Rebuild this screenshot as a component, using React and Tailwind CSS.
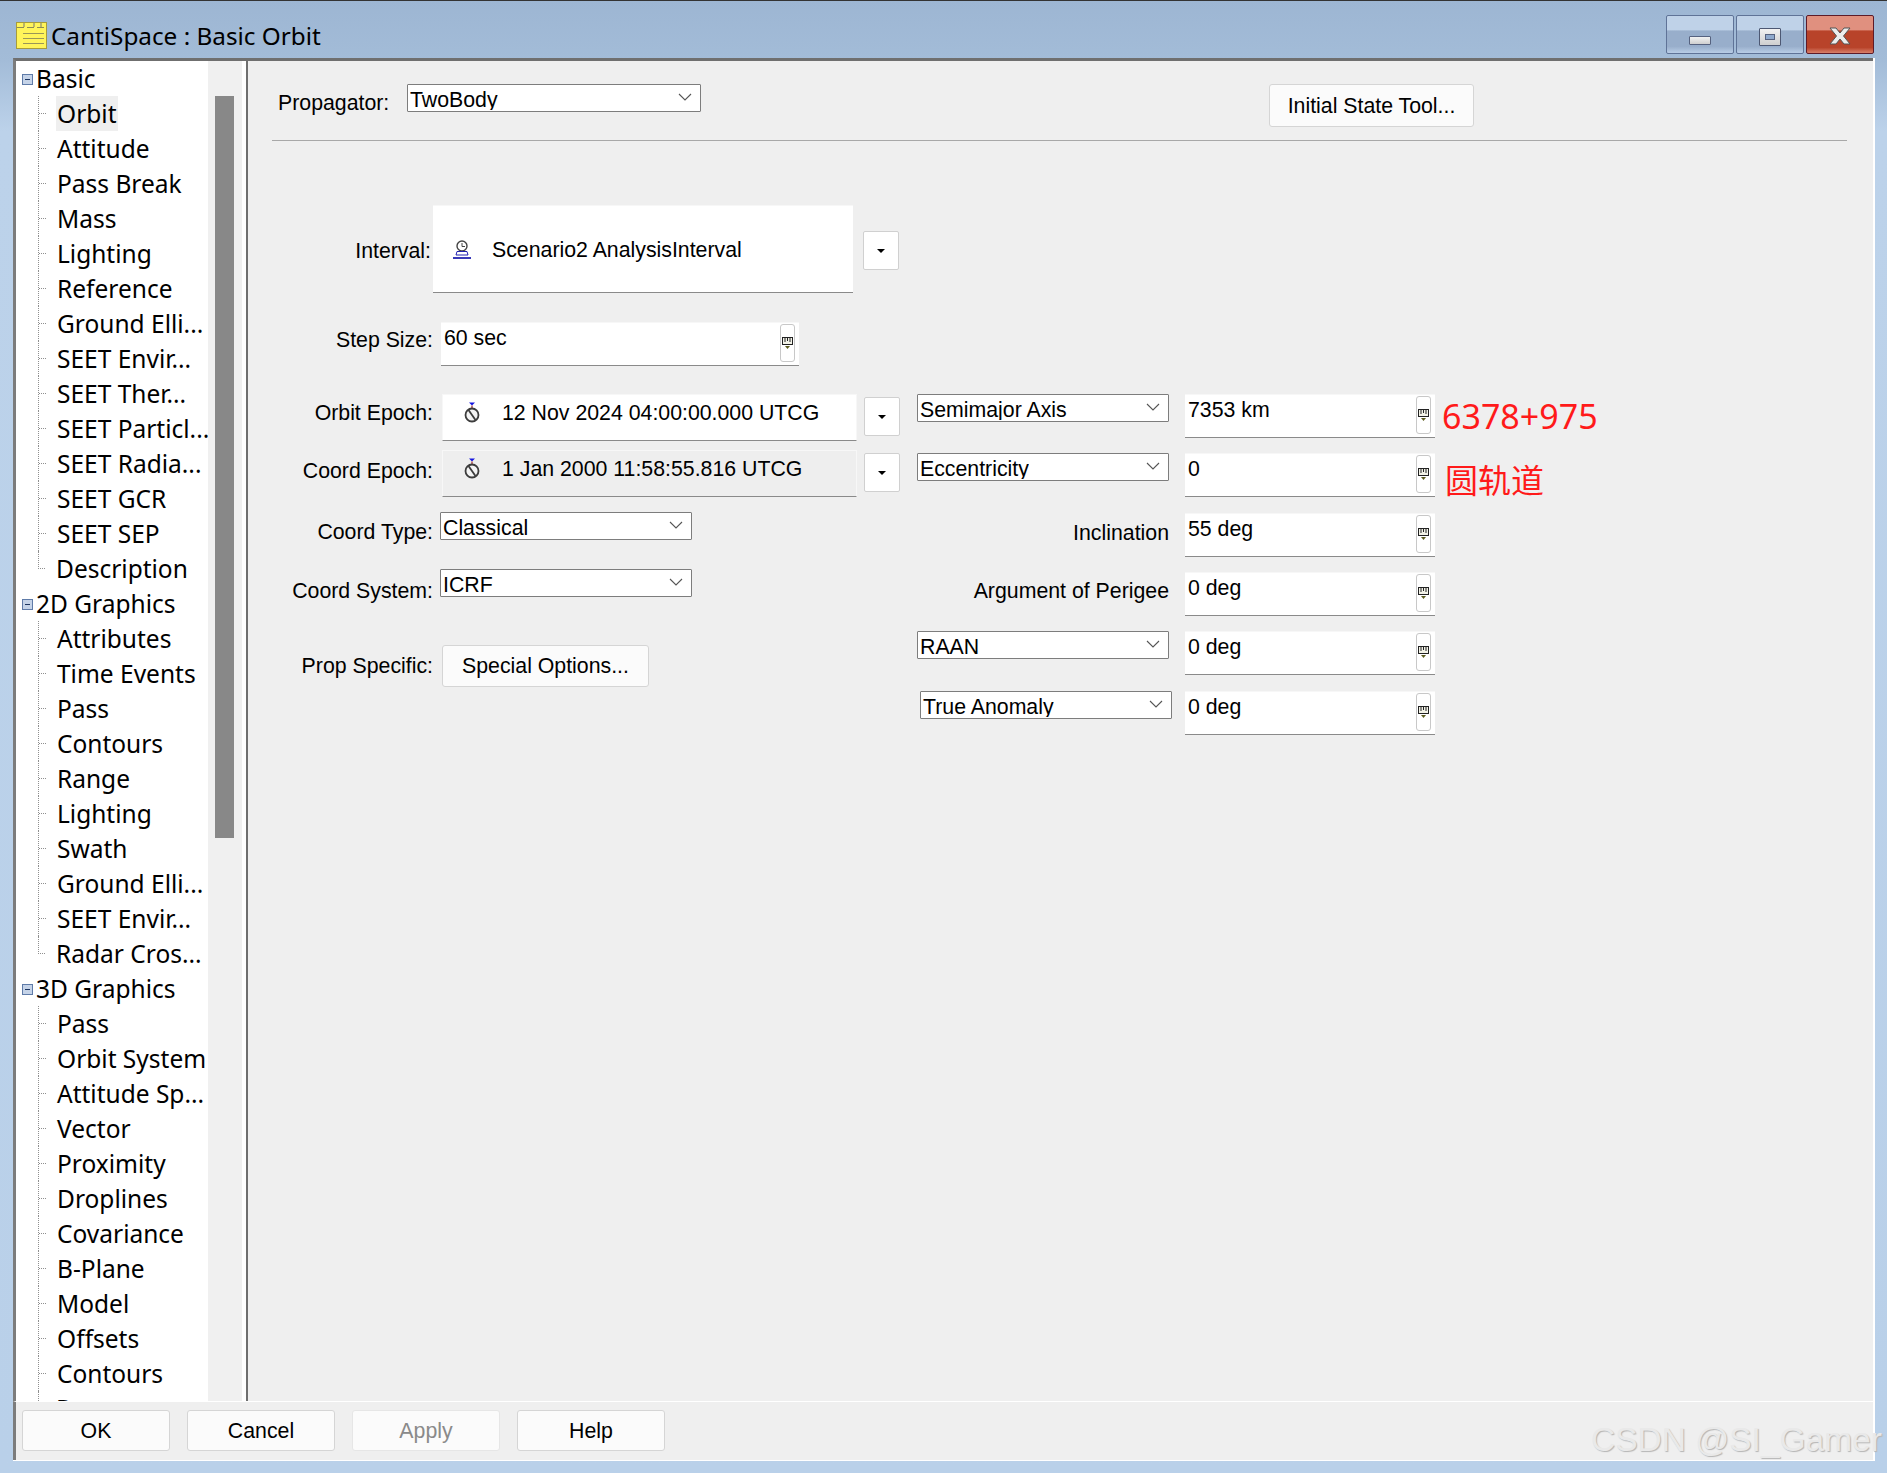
const TREE = [
  { title: "Basic", items: ["Orbit", "Attitude", "Pass Break", "Mass", "Lighting", "Reference", "Ground Elli...", "SEET Envir...", "SEET Ther...", "SEET Particl...", "SEET Radia...", "SEET GCR", "SEET SEP", "Description"] },
  { title: "2D Graphics", items: ["Attributes", "Time Events", "Pass", "Contours", "Range", "Lighting", "Swath", "Ground Elli...", "SEET Envir...", "Radar Cros..."] },
  { title: "3D Graphics", items: ["Pass", "Orbit System", "Attitude Sp...", "Vector", "Proximity", "Droplines", "Covariance", "B-Plane", "Model", "Offsets", "Contours", "Range"] },
];

const NoteIcon = () => (
  <svg width="31" height="27" viewBox="0 0 31 27" className="shrink-0">
    <rect x="0.5" y="0.5" width="30" height="26" fill="#fff45a" stroke="#a89c3a" />
    <path d="M1 5.500H30" stroke="#8d8a55" strokeDasharray="7 3" />
    <path d="M8 1V5M18 1V5M25 1V5" stroke="#777" />
    <path d="M7 11.500H28M7 16.500H28M7 21.500H28" stroke="#9a9658" />
  </svg>
);

const CloseIcon = () => (
  <svg width="24" height="18" viewBox="0 0 24 18">
    <path d="M2 1H8L12 6L16 1H22L15.500 9L22 17H16L12 12L8 17H2L8.500 9Z" fill="#ececec" stroke="#555" strokeWidth="1" />
  </svg>
);

const WinButton = ({ red, children }) => (
  <div
    className={`flex h-[39px] w-[68px] items-center justify-center rounded-[2px] border pt-[12px] ${
      red
        ? "border-[#5e1b28] bg-[linear-gradient(#e0907f_0%,#e0907f_38%,#b8432a_40%,#b8432a_85%,#d8806a_100%)]"
        : "border-[#5f7397] bg-[linear-gradient(#bfd2e8_0%,#bfd2e8_38%,#98aecb_40%,#98aecb_82%,#b9cde6_100%)]"
    }`}
  >
    {children}
  </div>
);

const Expander = () => (
  <span className="mx-[5px] mt-[1px] flex h-[11px] w-[11px] shrink-0 items-center justify-center border border-[#5f7ba8] bg-[#c5d3e8]">
    <span className="h-[1px] w-[5px] bg-[#1d3560]" />
  </span>
);

const TreeGroup = ({ group }) => (
  <div>
    <div className="flex h-[35px] items-center pl-[1px] text-[24.5px]">
      <Expander />
      <span className="ml-[-2px]">{group.title}</span>
    </div>
    {group.items.map((item, i) => (
      <div
        key={i}
        className={`ml-[22px] flex h-[35px] items-center ${
          i < group.items.length - 1 ? "border-l border-dotted border-[#8f8f8f]" : ""
        }`}
      >
        <span
          className={`h-1/2 w-[7px] shrink-0 self-start border-b border-dotted border-[#8f8f8f] ${
            i === group.items.length - 1 ? "border-l" : ""
          }`}
        />
        <span className={`ml-[10px] whitespace-nowrap px-[1px] text-[24.5px] leading-[35px] ${item === "Orbit" && group.title === "Basic" ? "bg-[#efefef]" : ""}`}>
          {item}
        </span>
      </div>
    ))}
  </div>
);

const Chevron = () => (
  <svg width="14" height="8" viewBox="0 0 14 8" className="shrink-0">
    <path d="M1 1L7 7L13 1" fill="none" stroke="#555" strokeWidth="1.100" />
  </svg>
);

const Combo = ({ text, w, className = "" }) => (
  <div className={`flex h-[28px] items-start justify-between overflow-hidden rounded-[1px] border border-[#7d7d7d] bg-white pl-[2px] pr-[8px] leading-[30px] ${w} ${className}`}>
    <span className="h-[25px] overflow-hidden">{text}</span>
    <span className="mt-[8px]"><Chevron /></span>
  </div>
);

const Caret = () => (
  <span className="h-0 w-0 border-x-[4px] border-t-[4px] border-x-transparent border-t-black" />
);

const DropButton = ({ className = "" }) => (
  <div className={`flex h-[39px] w-[36px] items-center justify-center rounded-[2px] border border-[#d0d0d0] bg-white ${className}`}>
    <Caret />
  </div>
);

const RulerIcon = () => (
  <svg width="11" height="13" viewBox="0 0 11 13">
    <rect x="0.5" y="0.5" width="10" height="7" fill="#f3f3e8" stroke="#222" />
    <path d="M3 1V5M5.500 1V4M8 1V5" stroke="#222" />
    <path d="M3 9H8L5.500 12Z" fill="#5d5d20" />
  </svg>
);

const SpinButton = ({ className = "" }) => (
  <div className={`flex w-[15px] shrink-0 items-center justify-center rounded-[3px] border border-[#c8c8c8] bg-white ${className}`}>
    <RulerIcon />
  </div>
);

const ValueField = ({ text, w, h, className = "" }) => (
  <div className={`flex justify-between border-b border-b-[#8a8a8a] border-t border-t-[#f7f7f7] bg-white pl-[3px] pr-[4px] pt-[1px] pb-[3px] leading-[28px] ${w} ${h} ${className}`}>
    <span className="h-[26px]">{text}</span>
    <SpinButton />
  </div>
);

const StopwatchIcon = () => (
  <svg width="16" height="22" viewBox="0 0 16 22" className="shrink-0">
    <path d="M5 0.500H11L8 3.500Z" fill="#1414e0" />
    <path d="M8 3.500V6" stroke="#b05050" strokeWidth="1.500" />
    <circle cx="8" cy="13" r="6.500" fill="#f4f4f4" stroke="#3c3c3c" strokeWidth="1.800" />
    <path d="M4.500 8L11.500 18" stroke="#3c3c3c" strokeWidth="1.800" />
  </svg>
);

const IntervalIcon = () => (
  <svg width="20" height="21" viewBox="0 0 20 21" className="shrink-0">
    <circle cx="10" cy="7" r="5" fill="#fff" stroke="#444" strokeWidth="1.400" />
    <path d="M10 4V7.500H13" fill="none" stroke="#444" />
    <path d="M5 12.500H15L16 16H4Z" fill="#fff" stroke="#2222b0" />
    <path d="M1 19H19" stroke="#2222b0" strokeWidth="1.800" />
  </svg>
);

const FieldLabel = ({ text, pt = "" }) => (
  <div className={`w-[161px] shrink-0 whitespace-nowrap text-right ${pt}`}>{text}</div>
);

const EpochRow = ({ label, value, className, labelPt, disabled }) => (
  <div className={`flex h-[47px] items-start ${className}`}>
    <FieldLabel text={label} pt={labelPt} />
    <div className={`ml-[9px] flex h-[47px] w-[415px] items-center border-x border-b border-t border-x-[#f7f7f7] border-b-[#8a8a8a] border-t-[#f7f7f7] pb-[10px] pl-[21px] ${disabled ? "bg-[#eeeeee]" : "bg-white"}`}>
      <StopwatchIcon />
      <span className="ml-[22px] whitespace-nowrap">{value}</span>
    </div>
    <DropButton className="ml-[7px] mt-[3px]" />
  </div>
);

const ComboRow = ({ label, value, className, labelPt }) => (
  <div className={`flex h-[28px] items-start ${className}`}>
    <FieldLabel text={label} pt={labelPt} />
    <Combo text={value} w="ml-[7px] w-[252px]" />
  </div>
);

const ORBIT_ROWS = [
  { combo: "Semimajor Axis", value: "7353 km", note: "6378+975", noteClass: "ml-[7px] mt-[1px] text-[34px] leading-[42px]" },
  { combo: "Eccentricity", value: "0", note: "圆轨道", noteClass: "ml-[10px] mt-[8px] text-[33px] leading-[40px]" },
  { label: "Inclination", value: "55 deg", labelPt: "pt-[6px]" },
  { label: "Argument of Perigee", value: "0 deg", labelPt: "pt-[5px]" },
  { combo: "RAAN", value: "0 deg" },
  { combo: "True Anomaly", value: "0 deg", shift: true },
];

const ROW_GAPS = ["mt-0", "mt-[15px]", "mt-[16px]", "mt-[15px]", "mt-[15px]", "mt-[16px]"];

const OrbitRow = ({ row, gap }) => (
  <div className={`flex h-[44px] items-start ${gap}`}>
    <div className="w-[252px] shrink-0">
      {row.combo ? (
        <Combo text={row.combo} w={row.shift ? "ml-[3px] w-[252px]" : "w-[252px]"} />
      ) : (
        <div className={`whitespace-nowrap text-right ${row.labelPt}`}>{row.label}</div>
      )}
    </div>
    <ValueField text={row.value} w="ml-[16px] w-[250px] shrink-0" h="h-[44px]" />
    {row.note && <span className={`whitespace-nowrap font-['Noto_Sans','Noto_Sans_CJK_SC',sans-serif] text-[#ff1a1a] ${row.noteClass}`}>{row.note}</span>}
  </div>
);

const PanelButton = ({ text, className = "" }) => (
  <div className={`flex items-center justify-center rounded-[3px] border border-[#d5d5d5] bg-[#fbfbfb] ${className}`}>
    {text}
  </div>
);

export default function App() {
  return (
    <div className="relative flex h-[1473px] w-[1887px] flex-col overflow-hidden border-t border-t-[#333] bg-[linear-gradient(#9db6d3_0px,#a3bcd8_60px,#bcd2ea_130px,#b9d0e9_100%)] font-['Liberation_Sans',sans-serif] text-[21.3px] leading-[28px] text-black">
      {/* title bar */}
      <div className="flex h-[57px] shrink-0 items-start pl-[16px] pr-[14px]">
        <div className="mt-[21px]"><NoteIcon /></div>
        <span className="ml-[4px] mt-[16px] font-['Noto_Sans',sans-serif] text-[24.3px] leading-[38px]">CantiSpace : Basic Orbit</span>
        <div className="ml-auto mr-[-1px] mt-[14px] flex gap-[2px]">
          <WinButton>
            <span className="h-[9px] w-[22px] rounded-[1px] border border-[#56627f] bg-[linear-gradient(#f2f2f2,#cfcfcf)]" />
          </WinButton>
          <WinButton>
            <span className="mb-[8px] flex h-[18px] w-[22px] items-center justify-center rounded-[1px] border border-[#4d5873] bg-[linear-gradient(#f2f2f2,#cfcfcf)]">
              <span className="h-[6px] w-[10px] border border-[#56627f] bg-[#8fa9cc]" />
            </span>
          </WinButton>
          <WinButton red>
            <span className="mb-[10px]"><CloseIcon /></span>
          </WinButton>
        </div>
      </div>

      {/* client area */}
      <div className="ml-[13px] mr-[12px] flex h-[1403px] flex-col border-b border-r-2 border-b-white border-r-white bg-[#efefef]">
        <div className="flex h-[1343px] border-l-[3px] border-t-[3px] border-l-[#7c7c7c] border-t-[#6f6f6f]">
          {/* tree */}
          <div className="h-full w-[192px] shrink-0 overflow-hidden bg-white font-['Noto_Sans',sans-serif]">
            {TREE.map((group) => (
              <TreeGroup key={group.title} group={group} />
            ))}
          </div>
          <div className="w-[34px] shrink-0 bg-[#f0f0f0] pl-[7px] pr-[8px] pt-[35px]">
            <div className="h-[742px] bg-[#888888]" />
          </div>
          <div className="w-[4px] shrink-0 bg-white" />
          <div className="w-[2px] shrink-0 bg-[#6f6f6f]" />

          {/* form panel */}
          <div className="min-w-0 flex-1 pl-[24px] pr-[26px]">
            <div className="flex h-[80px] items-start border-b border-b-[#a8a8a8]">
              <span className="ml-[6px] mt-[28px] w-[129px] shrink-0">Propagator:</span>
              <Combo text="TwoBody" w="mt-[23px] w-[294px] shrink-0" />
              <PanelButton text="Initial State Tool..." className="ml-[568px] mt-[23px] h-[43px] w-[205px] shrink-0 pt-[1px]" />
            </div>

            <div className="flex">
              <div className="w-[645px] shrink-0 pt-[64px]">
                <div className="flex h-[88px] items-center">
                  <div className="w-[159px] shrink-0 whitespace-nowrap pt-[3px] text-right">Interval:</div>
                  <div className="ml-[2px] flex h-[88px] w-[420px] items-center border-b border-b-[#8a8a8a] border-t border-t-[#f7f7f7] bg-white pl-[19px]">
                    <IntervalIcon />
                    <span className="ml-[20px] whitespace-nowrap pt-[2px]">Scenario2 AnalysisInterval</span>
                  </div>
                  <DropButton className="ml-[10px] mt-[3px]" />
                </div>

                <div className="mt-[29px] flex h-[44px] items-start">
                  <FieldLabel text="Step Size:" pt="pt-[4px]" />
                  <ValueField text="60 sec" w="ml-[8px] w-[358px]" h="h-[44px]" />
                </div>

                <EpochRow label="Orbit Epoch:" labelPt="pt-[5px]" value="12 Nov 2024 04:00:00.000 UTCG" className="mt-[28px]" />
                <EpochRow label="Coord Epoch:" labelPt="pt-[7px]" value="1 Jan 2000 11:58:55.816 UTCG" className="mt-[9px]" disabled />

                <ComboRow label="Coord Type:" labelPt="pt-[6px]" value="Classical" className="mt-[15px]" />
                <ComboRow label="Coord System:" labelPt="pt-[8px]" value="ICRF" className="mt-[29px]" />

                <div className="mt-[48px] flex h-[42px] items-center">
                  <FieldLabel text="Prop Specific:" />
                  <PanelButton text="Special Options..." className="ml-[9px] h-[42px] w-[207px]" />
                </div>
              </div>

              <div className="pt-[253px]">
                {ORBIT_ROWS.map((row, i) => (
                  <OrbitRow key={i} row={row} gap={ROW_GAPS[i]} />
                ))}
              </div>
            </div>
          </div>
        </div>

        {/* bottom buttons */}
        <div className="flex flex-1 gap-[17px] border-l-[3px] border-t border-l-[#7c7c7c] border-t-white pl-[6px] pt-[8px]">
          <PanelButton text="OK" className="h-[41px] w-[148px]" />
          <PanelButton text="Cancel" className="h-[41px] w-[148px]" />
          <PanelButton text="Apply" className="h-[41px] w-[148px] border-[#e6e6e6] bg-[#f6f6f6] text-[#8a8a8a]" />
          <PanelButton text="Help" className="h-[41px] w-[148px]" />
        </div>
      </div>

      {/* watermark */}
      <span className="absolute left-[1591px] top-[1419px] whitespace-nowrap font-['Liberation_Sans',sans-serif] text-[33.500px] leading-[40px] text-[#e9e9e9] [text-shadow:1px_1px_1px_#b5b5b5]">
        CSDN @SI_Gamer
      </span>
    </div>
  );
}
